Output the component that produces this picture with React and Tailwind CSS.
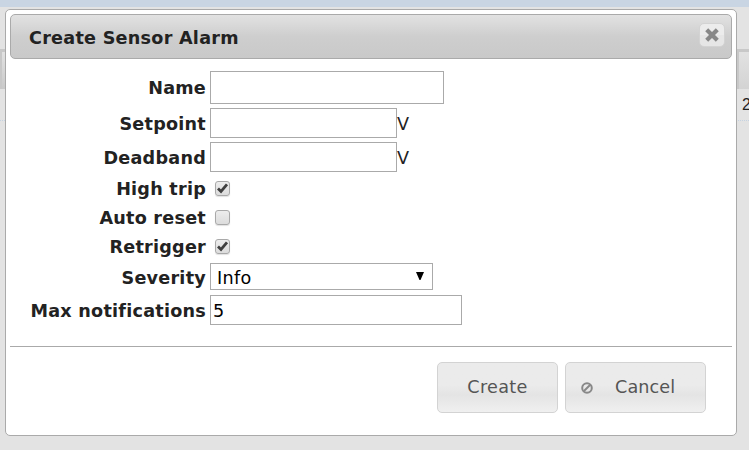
import React, { useState } from "react";

const Field = ({ label, height, children }) => (
  <div className={`flex items-center ${height}`}>
    <label className="w-[196px] pt-0.5 text-right text-[17.6px] font-bold tracking-[0.24px] whitespace-nowrap text-[#222222]">
      {label}
    </label>
    <div className="ml-1 flex items-center">{children}</div>
  </div>
);

const CheckBox = ({ checked, onClick }) => (
  <button
    type="button"
    role="checkbox"
    aria-checked={checked}
    onClick={onClick}
    className="mb-px ml-[5px] flex h-[15px] w-[15px] items-center justify-center rounded-[3px] border border-[#a9a9a9] bg-linear-to-b from-[#ededed] to-[#dcdcdc] shadow-[0_1px_1px_rgba(0,0,0,0.12)]"
  >
    {checked && (
      <svg className="h-[13px] w-[13px] shrink-0" viewBox="0 0 13 13" fill="none">
        <path d="M2 6.4 L5 9.4 L11 2.4" stroke="#404040" strokeWidth="2.8" />
      </svg>
    )}
  </button>
);

// Page that stays visible around the dialog
const PageBehind = () => (
  <div className="flex h-full flex-col">
    <div className="h-[7px] bg-[#c9d5e3]" />
    <div className="h-[42px]" />
    <div className="flex h-10 justify-between border-t-[3px] border-[#c8c8c8]">
      <div className="w-[7px] border-l-2 border-[#c8c8c8] bg-linear-to-b from-[#e2e2e2] to-[#c9c9c9]" />
      <div className="w-[12px] border-l-2 border-[#c8c8c8] bg-linear-to-b from-[#e2e2e2] to-[#d3d3d3]" />
    </div>
    <div className="flex h-8 justify-end overflow-hidden border-b border-dotted border-[#c5d3e2]">
      <span className="w-[7px] pt-[6px] font-['Liberation_Sans',sans-serif] text-[16px] leading-[20px] text-[#222222]">
        2
      </span>
    </div>
  </div>
);

const App = () => {
  const [name, setName] = useState("");
  const [setpoint, setSetpoint] = useState("");
  const [deadband, setDeadband] = useState("");
  const [highTrip, setHighTrip] = useState(true);
  const [autoReset, setAutoReset] = useState(false);
  const [retrigger, setRetrigger] = useState(true);
  const [maxNotifications, setMaxNotifications] = useState("5");

  return (
    <div className="relative h-[450px] w-[749px] overflow-hidden bg-[#e3e3e3] font-['Verdana','DejaVu_Sans',sans-serif]">
      <PageBehind />
      <div className="absolute top-[9px] left-[5px] h-[427px] w-[732px] rounded-[5px] border border-[#aaaaaa] bg-white px-1 pt-1">
        <div className="flex h-[45px] items-center justify-between rounded-[5px] border border-[#aaaaaa] bg-linear-to-b from-[#e2e2e2] via-[#cecece] to-[#c9c9c9] pr-1.5 pl-[18px]">
          <h2 className="pt-[3px] text-[17.6px] font-bold tracking-[0.26px] text-[#222222]">
            Create Sensor Alarm
          </h2>
          <button
            type="button"
            aria-label="Close"
            className="mb-[3px] flex h-6 w-[26px] items-center justify-center rounded-[5px] border border-[#d3d3d3] bg-linear-to-b from-[#ececec] from-50% to-[#e6e6e6] to-50%"
          >
            <svg className="h-[14px] w-[14px]" viewBox="0 0 14 14">
              <path d="M3.2 3.2 L10.8 10.8 M10.8 3.2 L3.2 10.8" stroke="#888888" strokeWidth="4.2" strokeLinecap="square" />
            </svg>
          </button>
        </div>

        <form className="pt-[10px]" onSubmit={(e) => e.preventDefault()}>
          <Field label="Name" height="h-[37px]">
            <input
              type="text"
              value={name}
              onChange={(e) => setName(e.target.value)}
              className="h-[33px] w-[234px] border border-[#aaaaaa] bg-white px-0.5 text-[17.6px]"
            />
          </Field>
          <Field label="Setpoint" height="h-[34px]">
            <input
              type="text"
              value={setpoint}
              onChange={(e) => setSetpoint(e.target.value)}
              className="h-[30px] w-[187px] border border-[#aaaaaa] bg-white px-0.5 text-[17.6px]"
            />
            <span className="pt-0.5 text-[17.6px] text-[#222222]">V</span>
          </Field>
          <Field label="Deadband" height="h-[34px]">
            <input
              type="text"
              value={deadband}
              onChange={(e) => setDeadband(e.target.value)}
              className="h-[30px] w-[187px] border border-[#aaaaaa] bg-white px-0.5 text-[17.6px]"
            />
            <span className="pt-0.5 text-[17.6px] text-[#222222]">V</span>
          </Field>
          <Field label="High trip" height="h-[29px]">
            <CheckBox checked={highTrip} onClick={() => setHighTrip(!highTrip)} />
          </Field>
          <Field label="Auto reset" height="h-[29px]">
            <CheckBox checked={autoReset} onClick={() => setAutoReset(!autoReset)} />
          </Field>
          <Field label="Retrigger" height="h-[29px]">
            <CheckBox checked={retrigger} onClick={() => setRetrigger(!retrigger)} />
          </Field>
          <Field label="Severity" height="h-8">
            <button
              type="button"
              className="mb-px flex h-[27px] w-[223px] items-center justify-between border border-[#aaaaaa] bg-white pr-2 pl-1.5 text-[17.6px] text-black"
            >
              <span className="pt-[3px] tracking-[0.3px]">Info</span>
              <svg className="mb-0.5 h-2 w-2" viewBox="0 0 8 8">
                <path d="M0 0 H8 L4.5 8 H3.5 Z" fill="#000000" />
              </svg>
            </button>
          </Field>
          <Field label="Max notifications" height="h-[34px]">
            <input
              type="text"
              value={maxNotifications}
              onChange={(e) => setMaxNotifications(e.target.value)}
              className="h-[30px] w-[252px] border border-[#aaaaaa] bg-white px-0.5 pt-0.5 text-[17.6px] text-black"
            />
          </Field>
        </form>

        <div className="mt-[19px] flex justify-end gap-[7px] border-t border-[#aaaaaa] pt-[15px] pr-[26px]">
          <button
            type="submit"
            className="h-[51px] w-[121px] rounded-[5px] border border-[#d3d3d3] bg-linear-to-b from-[#ebebeb] from-45% via-[#e4e4e4] via-65% to-[#f0f0f0] text-[17.6px] tracking-[0.3px] text-[#555555]"
          >
            Create
          </button>
          <button
            type="button"
            className="flex h-[51px] w-[141px] items-center rounded-[5px] border border-[#d3d3d3] bg-linear-to-b from-[#ebebeb] from-45% via-[#e4e4e4] via-65% to-[#f0f0f0] pl-[15px] text-[17.6px] tracking-[0.1px] text-[#555555]"
          >
            <svg className="mr-[22px] h-3 w-3" viewBox="0 0 12 12" fill="none" stroke="#888888">
              <circle cx="6" cy="6" r="4.8" strokeWidth="2" />
              <path d="M3 9 L9 3" strokeWidth="2" />
            </svg>
            <span>Cancel</span>
          </button>
        </div>
      </div>
    </div>
  );
};

export default App;
